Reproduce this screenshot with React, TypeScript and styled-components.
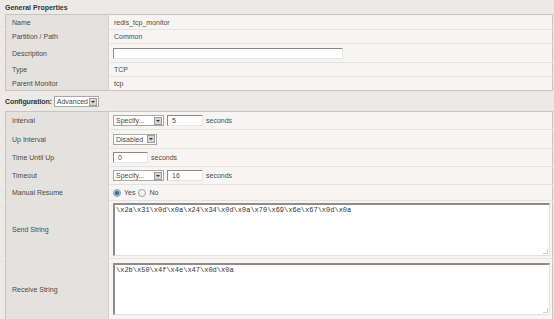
import React from "react"
import styled, { createGlobalStyle } from "styled-components"

const Global = createGlobalStyle`
        body {
                margin: 0;
                background: #ebeae6;
                font-family: "Liberation Sans", Arial, sans-serif;
                font-size: 7px;
                color: #4a4a4a;
        }
`;

const Page = styled.div`
        width: 548px;
        padding-left: 5px;
        display: flex;
        flex-direction: column;
`;

const SectionTitle = styled.div`
        height: 14px;
        line-height: 16px;
        font-weight: bold;
        color: #333;
        font-size: 7px;
`;

const ConfigBar = styled.div`
        height: 20px;
        display: flex;
        align-items: center;
        gap: 2px;
        padding-top: 1px;
        box-sizing: border-box;

        & > b {
                color: #333;
                letter-spacing: -0.1px;
        }
`;

const Table = styled.table`
        width: 548px;
        border-collapse: collapse;
        border: 1px solid #c6c5c1;
        table-layout: fixed;
`;

const Row = styled.tr<{ $h: number }>`
        height: ${props => props.$h}px;
        border-top: 1px solid #e4e3df;
        &:first-child {
                border-top: none;
        }
`;

const Label = styled.td`
        width: 96px;
        padding: 0 0 0 6px;
        background: #e3e2de;
        border-right: 1px solid #d3d2ce;
        vertical-align: middle;
        white-space: nowrap;
`;

const Value = styled.td`
        padding: 0 0 0 4px;
        background: #f6f5f3;
        vertical-align: middle;
        white-space: nowrap;
`;

const Line = styled.div`
        display: flex;
        align-items: center;
        gap: 3px;
`;

const Text = styled.span`
        padding-left: 1px;
`;

const Input = styled.div<{ $w: number }>`
        width: ${props => props.$w}px;
        height: 11px;
        box-sizing: border-box;
        background: #fff;
        border-top: 1px solid #8a8a8a;
        border-left: 1px solid #8a8a8a;
        border-right: 1px solid #e6e6e6;
        border-bottom: 1px solid #e6e6e6;
        padding-left: 4px;
        line-height: 10px;
`;

const Select = styled.div<{ $w: number }>`
        width: ${props => props.$w}px;
        height: 11px;
        box-sizing: border-box;
        background: #fff;
        border: 1px solid #a9a9a9;
        display: flex;
        align-items: center;
        justify-content: space-between;
        padding-left: 2px;
        line-height: 9px;
        overflow: hidden;
`;

const Arrow = styled.span`
        flex: none;
        width: 8px;
        height: 8px;
        margin-right: 1px;
        background: #d6d5d1;
        border: 1px solid #9e9e9e;
        box-sizing: border-box;
        display: flex;
        align-items: center;
        justify-content: center;

        &::after {
                content: "";
                border-left: 2px solid transparent;
                border-right: 2px solid transparent;
                border-top: 2px solid #333;
        }
`;

const Radio = styled.span<{ $on?: boolean }>`
        width: 6px;
        height: 6px;
        border-radius: 50%;
        border: 1px solid #9aa3ad;
        background: ${props => props.$on ? "radial-gradient(circle, #3c6a96 35%, #a8bed4 60%, #dfe6ee 100%)" : "#f4f4f4"};
        display: inline-block;
`;

const Area = styled.div<{ $h: number }>`
        width: 437px;
        height: ${props => props.$h}px;
        box-sizing: border-box;
        background: #fff;
        border-top: 2px solid #8c8c8c;
        border-left: 2px solid #8c8c8c;
        border-right: 1px solid #e2e2e2;
        border-bottom: 1px solid #e2e2e2;
        padding: 1px 0 0 1px;
        font-family: "Liberation Mono", "Courier New", monospace;
        font-size: 7px;
        line-height: 9px;
        color: #333;
        position: relative;

        &::after {
                content: "";
                position: absolute;
                right: 1px;
                bottom: 1px;
                width: 4px;
                height: 4px;
                border-right: 1px solid #cfcfcf;
                border-bottom: 1px solid #cfcfcf;
        }
`;

const Dropdown: React.FunctionComponent<{ w: number; text: string }> = ({ w, text }) => (
        <Select $w={w}>
                <span>{text}</span>
                <Arrow />
        </Select>
)

const App: React.FunctionComponent = () => {
        return (
                <Page>
                        <Global />
                        <SectionTitle>General Properties</SectionTitle>
                        <Table>
                                <tbody>
                                        <Row $h={15}><Label>Name</Label><Value><Text>redis_tcp_monitor</Text></Value></Row>
                                        <Row $h={14}><Label>Partition / Path</Label><Value><Text>Common</Text></Value></Row>
                                        <Row $h={19}><Label>Description</Label><Value><Input $w={230} /></Value></Row>
                                        <Row $h={14}><Label>Type</Label><Value><Text>TCP</Text></Value></Row>
                                        <Row $h={14}><Label>Parent Monitor</Label><Value><Text>tcp</Text></Value></Row>
                                </tbody>
                        </Table>
                        <ConfigBar>
                                <b>Configuration:</b>
                                <Dropdown w={45} text="Advanced" />
                        </ConfigBar>
                        <Table>
                                <tbody>
                                        <Row $h={18}>
                                                <Label>Interval</Label>
                                                <Value>
                                                        <Line>
                                                                <Dropdown w={51} text="Specify..." />
                                                                <Input $w={36}>5</Input>
                                                                <span>seconds</span>
                                                        </Line>
                                                </Value>
                                        </Row>
                                        <Row $h={19}>
                                                <Label>Up Interval</Label>
                                                <Value><Line><Dropdown w={44} text="Disabled" /></Line></Value>
                                        </Row>
                                        <Row $h={18}>
                                                <Label>Time Until Up</Label>
                                                <Value>
                                                        <Line>
                                                                <Input $w={35}>0</Input>
                                                                <span>seconds</span>
                                                        </Line>
                                                </Value>
                                        </Row>
                                        <Row $h={18}>
                                                <Label>Timeout</Label>
                                                <Value>
                                                        <Line>
                                                                <Dropdown w={51} text="Specify..." />
                                                                <Input $w={36}>16</Input>
                                                                <span>seconds</span>
                                                        </Line>
                                                </Value>
                                        </Row>
                                        <Row $h={16}>
                                                <Label>Manual Resume</Label>
                                                <Value>
                                                        <Line>
                                                                <Radio $on />
                                                                <span>Yes</span>
                                                                <Radio />
                                                                <span>No</span>
                                                        </Line>
                                                </Value>
                                        </Row>
                                        <Row $h={58}>
                                                <Label>Send String</Label>
                                                <Value><Area $h={53}>\x2a\x31\x0d\x0a\x24\x34\x0d\x0a\x70\x69\x6e\x67\x0d\x0a</Area></Value>
                                        </Row>
                                        <Row $h={61}>
                                                <Label>Receive String</Label>
                                                <Value><Area $h={52}>\x2b\x50\x4f\x4e\x47\x0d\x0a</Area></Value>
                                        </Row>
                                </tbody>
                        </Table>
                </Page>
        )
}

export default App;
